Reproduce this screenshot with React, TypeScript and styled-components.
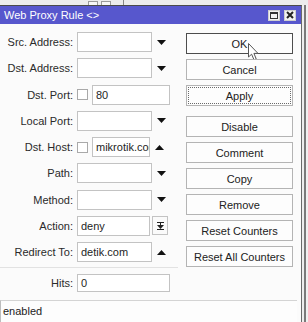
import React from 'react';
import styled, { createGlobalStyle } from 'styled-components';

const GlobalStyle = createGlobalStyle`
  html, body {
    margin: 0;
    padding: 0;
    background: #e6e6e6;
  }
  * {
    box-sizing: border-box;
  }
`;

const Screen = styled.div`
  width: 308px;
  height: 322px;
  overflow: hidden;
  display: flex;
  flex-direction: column;
  background: #e6e6e6;
  font-family: "Liberation Sans", Arial, sans-serif;
  font-size: 11px;
  color: #222;
`;

const TopStrip = styled.div`
  height: 5px;
  flex: none;
  display: flex;
  align-items: flex-end;
  gap: 3px;
  padding-left: 88px;
  background: #ececec;
`;

const StripBox = styled.div<{ $w: number }>`
  width: ${(p) => p.$w}px;
  height: 4px;
  border: 1px solid #9a9a9a;
  border-bottom: none;
  background: #f6f6f6;
`;

const StripLine = styled.div`
  width: 1px;
  height: 5px;
  margin-left: 9px;
  background: #888;
`;

const MainRow = styled.div`
  flex: 1;
  display: flex;
  min-height: 0;
`;

const Dialog = styled.div`
  width: 302px;
  flex: none;
  display: flex;
  flex-direction: column;
  border-top: 1px solid #4a4a4a;
  border-right: 1px solid #6a6a6a;
  background: #fbfbfb;
`;

const Frame = styled.div`
  flex: 1;
  border-left: 2px solid #eeeeee;
  background: linear-gradient(to right, #7a7a7a 0, #7a7a7a 2px, #f0f0f0 2px);
`;

const TitleBar = styled.div`
  height: 18px;
  flex: none;
  display: flex;
  align-items: center;
  padding: 0 5px 0 4px;
  background: #5757cd;
  color: #fff;
`;

const Title = styled.span`
  flex: 1;
`;

const TitleButton = styled.div`
  width: 12px;
  height: 11px;
  margin-left: 4px;
  display: flex;
  align-items: center;
  justify-content: center;
  background: #f2f2f2;
  border: 1px solid #cfcfcf;
`;

const Body = styled.div`
  flex: none;
  height: 276px;
  display: flex;
  padding-right: 8px;
`;

const FormColumn = styled.div`
  width: 178px;
  padding-top: 8px;
  display: flex;
  flex-direction: column;
`;

const FieldGrid = styled.div`
  display: grid;
  grid-template-columns: 73px 93px;
  grid-auto-rows: 20px;
  column-gap: 4px;
  row-gap: 6.25px;
`;

const Label = styled.div`
  text-align: right;
  align-self: center;
  white-space: nowrap;
  color: #2a2a2a;
`;

const Control = styled.div`
  display: flex;
  align-items: center;
  height: 100%;
`;

const Input = styled.div<{ $w: number; $h?: number }>`
  width: ${(p) => p.$w}px;
  height: ${(p) => p.$h ?? 20}px;
  flex: none;
  display: flex;
  align-items: center;
  padding-left: 3px;
  overflow: hidden;
  white-space: nowrap;
  background: #fff;
  border: 1px solid #c3c3c3;
  color: #1e1e1e;
`;

const Check = styled.div`
  width: 11px;
  height: 11px;
  flex: none;
  margin-right: 4px;
  background: #fff;
  border: 1px solid #a9a9a9;
`;

const ArrowSlot = styled.div`
  width: 18px;
  flex: none;
  display: flex;
  justify-content: center;
`;

const SideButton = styled.div`
  width: 16px;
  height: 19px;
  margin-left: 2px;
  display: flex;
  align-items: center;
  justify-content: center;
  background: #fafafa;
  border: 1px solid #c3c3c3;
`;

const Separator = styled.div`
  height: 1px;
  margin-top: 5px;
  background: #e2e2e2;
`;

const HitsRow = styled.div`
  margin-top: 6px;
  display: grid;
  grid-template-columns: 73px 93px;
  column-gap: 4px;
  height: 18px;
`;

const ButtonColumn = styled.div`
  margin-left: auto;
  width: 107px;
  padding-top: 9px;
  display: flex;
  flex-direction: column;
  gap: 5px;
`;

const Button = styled.div<{ $kind?: 'default' | 'focus'; $gapTop?: boolean }>`
  position: relative;
  height: 21px;
  flex: none;
  display: flex;
  align-items: center;
  justify-content: center;
  margin-top: ${(p) => (p.$gapTop ? 5 : 0)}px;
  background: #fdfdfd;
  color: #222;
  border: 1px solid ${(p) => (p.$kind === 'default' ? '#4d4d4d' : '#b4b4b4')};
  outline: ${(p) => (p.$kind === 'focus' ? '1px dotted #6a6a6a' : 'none')};
  outline-offset: -3px;
`;

const Cursor = styled.svg`
  position: absolute;
  left: 61px;
  top: 9px;
`;

const StatusBar = styled.div`
  flex: 1;
  margin-right: 4px;
  padding: 4px 0 0 2px;
  border-top: 1px solid #d4d4d4;
  border-left: 1px solid #bdbdbd;
  background: #fdfdfd;
  color: #222;
`;

const Down = () => (
  <svg width="9" height="5" viewBox="0 0 9 5">
    <path d="M0 0 H9 L4.5 5 Z" fill="#111" />
  </svg>
);

const Up = () => (
  <svg width="9" height="5" viewBox="0 0 9 5">
    <path d="M0 5 H9 L4.5 0 Z" fill="#111" />
  </svg>
);

const ToBottom = () => (
  <svg width="7" height="8" viewBox="0 0 7 8">
    <rect x="0" y="0" width="7" height="1" fill="#222" />
    <rect x="3" y="1" width="1" height="3" fill="#222" />
    <path d="M0 3 H7 L3.5 7 Z" fill="#222" />
    <rect x="0" y="7" width="7" height="1" fill="#222" />
  </svg>
);

type Field = {
  label: string;
  check?: boolean;
  value?: string;
  width: number;
  arrow?: 'down' | 'up';
  side?: boolean;
};

const fields: Field[] = [
  { label: 'Src. Address:', width: 75, arrow: 'down' },
  { label: 'Dst. Address:', width: 75, arrow: 'down' },
  { label: 'Dst. Port:', check: true, value: '80', width: 78 },
  { label: 'Local Port:', width: 75, arrow: 'down' },
  { label: 'Dst. Host:', check: true, value: 'mikrotik.com', width: 58, arrow: 'up' },
  { label: 'Path:', width: 75, arrow: 'down' },
  { label: 'Method:', width: 75, arrow: 'down' },
  { label: 'Action:', value: 'deny', width: 73, side: true },
  { label: 'Redirect To:', value: 'detik.com', width: 75, arrow: 'up' },
];

const buttons = ['Disable', 'Comment', 'Copy', 'Remove', 'Reset Counters', 'Reset All Counters'];

export default function App() {
  return (
    <Screen>
      <GlobalStyle />
      <TopStrip>
        <StripBox $w={10} />
        <StripBox $w={10} />
        <StripLine />
      </TopStrip>
      <MainRow>
        <Dialog>
          <TitleBar>
            <Title>Web Proxy Rule &lt;&gt;</Title>
            <TitleButton>
              <svg width="8" height="7" viewBox="0 0 8 7">
                <rect x="0.5" y="0.5" width="7" height="6" fill="none" stroke="#333" />
                <rect x="0" y="0" width="8" height="2" fill="#333" />
              </svg>
            </TitleButton>
            <TitleButton>
              <svg width="8" height="8" viewBox="0 0 8 8">
                <path d="M1 1 L7 7 M7 1 L1 7" stroke="#222" strokeWidth="2" />
              </svg>
            </TitleButton>
          </TitleBar>
          <Body>
            <FormColumn>
              <FieldGrid>
                {fields.map((f) => (
                  <React.Fragment key={f.label}>
                    <Label>{f.label}</Label>
                    <Control>
                      {f.check && <Check />}
                      <Input $w={f.width}>{f.value}</Input>
                      {f.arrow && <ArrowSlot>{f.arrow === 'down' ? <Down /> : <Up />}</ArrowSlot>}
                      {f.side && (
                        <SideButton>
                          <ToBottom />
                        </SideButton>
                      )}
                    </Control>
                  </React.Fragment>
                ))}
              </FieldGrid>
              <Separator />
              <HitsRow>
                <Label>Hits:</Label>
                <Input $w={93} $h={18}>0</Input>
              </HitsRow>
            </FormColumn>
            <ButtonColumn>
              <Button $kind="default">
                OK
                <Cursor width="12" height="18" viewBox="0 0 12 18">
                  <path
                    d="M0.5 0.5 V14 L3.6 11.2 L6 16.8 L8.2 15.8 L5.9 10.4 H10 Z"
                    fill="#fff"
                    stroke="#555"
                    strokeWidth="1"
                  />
                </Cursor>
              </Button>
              <Button>Cancel</Button>
              <Button $kind="focus">Apply</Button>
              {buttons.map((b, i) => (
                <Button key={b} $gapTop={i === 0}>
                  {b}
                </Button>
              ))}
            </ButtonColumn>
          </Body>
          <StatusBar>enabled</StatusBar>
        </Dialog>
        <Frame />
      </MainRow>
    </Screen>
  );
}
